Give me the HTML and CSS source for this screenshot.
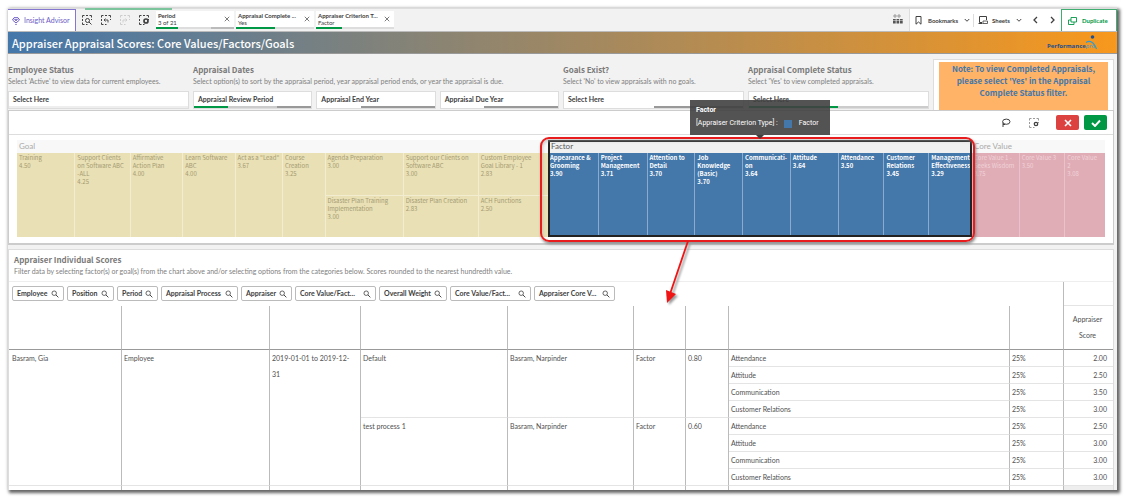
FILE: index.html
```html
<!DOCTYPE html>
<html lang="en">
<head>
<meta charset="utf-8">
<title>Appraiser Appraisal Scores</title>
<link rel="stylesheet" href="styles.css">
</head>
<body>
<svg class="defs" aria-hidden="true">
  <symbol id="search" viewBox="0 0 10 10"><circle cx="4" cy="4" r="2.8" fill="none" stroke="currentColor"/><path d="M6.2 6.2 9.2 9.2" stroke="currentColor" stroke-width="1.2"/></symbol>
  <symbol id="frame" viewBox="0 0 10 10"><path d="M.5 2.5v-2h2M4 .5h2M7.5.5h2v2M.5 4v2M9.5 4v1M.5 7.5v2h2M4 9.5h1.5" fill="none" stroke="currentColor"/></symbol>
  <symbol id="chev" viewBox="0 0 8 6"><path d="m1 1 3 3 3-3" fill="none" stroke="currentColor" stroke-width="1.3"/></symbol>
  <symbol id="x" viewBox="0 0 8 8"><path d="m1 1 6 6M7 1 1 7" fill="none" stroke="currentColor" stroke-width="1"/></symbol>
</svg>
<main class="app">
  <nav class="toolbar">
    <button class="advisor"><svg width="8" height="8" viewBox="0 0 8 8"><path d="M2 .7h4L7.500 3 4 6 .5 3z" fill="none" stroke="currentColor"/><path d="M2.500 2.500h3L4 4zM3.200 7.500h1.600" fill="none" stroke="currentColor" stroke-width=".8"/></svg>Insight Advisor</button>
    <div class="tools">
      <button aria-label="Smart search"><svg width="10" height="10"><use href="#frame"/><g transform="translate(3 3)"><circle cx="2.500" cy="2.500" r="2" fill="#f2f2f2" stroke="currentColor"/><path d="m4 4 2.500 2.500" stroke="currentColor"/></g></svg></button>
      <button aria-label="Step back"><svg width="10" height="10"><use href="#frame"/><path d="M7 7.500V5H3.500M4.500 3.500 3 5l1.500 1.500" fill="none" stroke="currentColor" stroke-width=".9"/></svg></button>
      <button aria-label="Step forward" disabled><svg width="10" height="10"><use href="#frame"/><path d="M3 7.500V5h3.500M5.500 3.500 7 5 5.500 6.500" fill="none" stroke="currentColor" stroke-width=".9"/></svg></button>
      <button aria-label="Selections tool"><svg width="10" height="10"><use href="#frame"/><circle cx="7" cy="6" r="2" fill="none" stroke="currentColor" stroke-width="1.700"/></svg></button>
    </div>
    <ul class="chips">
      <li class="chip"><span><b>Period</b><small>3 of 21</small></span><button aria-label="Clear Period"><svg width="6" height="6"><use href="#x"/></svg></button><i class="meter m-period"></i></li>
      <li class="chip"><span><b>Appraisal Complete ...</b><small>Yes</small></span><button aria-label="Clear Appraisal Complete"><svg width="6" height="6"><use href="#x"/></svg></button><i class="meter m-half"></i></li>
      <li class="chip"><span><b>Appraiser Criterion T...</b><small>Factor</small></span><button aria-label="Clear Appraiser Criterion"><svg width="6" height="6"><use href="#x"/></svg></button><i class="meter m-third"></i></li>
    </ul>
    <button class="grid-btn" aria-label="Selections overview"><svg width="10" height="10" viewBox="0 0 10 10"><path d="M1 1h2v2H1zM5 1h2v2H5z" fill="none" stroke="#888" stroke-width=".8"/><path d="M0 5h2.700v1.500H0zM3.500 5h2.700v1.500H3.500zM7 5h2.700v1.500H7zM0 7h2.700v2.500H0zM3.500 7h2.700v2.500H3.500zM7 7h2.700v2.500H7z" fill="#555"/></svg></button>
    <div class="nav-right">
      <button class="nav-btn bookmarks"><svg width="7" height="9" viewBox="0 0 7 9"><path d="M1 .5h5v7.700L3.500 6 1 8.200z" fill="none" stroke="currentColor"/></svg>Bookmarks<svg class="caret" width="6" height="5"><use href="#chev"/></svg></button>
      <button class="nav-btn sheets"><svg width="10" height="8" viewBox="0 0 10 8"><path d="M4 6.500H1.500v-6h7V4M.5 7.500h4" fill="none" stroke="currentColor"/><path d="M5 5h4.500v2.500H5z" fill="none" stroke="currentColor" stroke-width=".8"/></svg>Sheets<svg class="caret" width="6" height="5"><use href="#chev"/></svg></button>
      <button class="step" aria-label="Previous sheet"><svg width="5" height="8" viewBox="0 0 5 8"><path d="M4 1 1 4l3 3" fill="none" stroke="currentColor" stroke-width="1.300"/></svg></button>
      <button class="step" aria-label="Next sheet"><svg width="5" height="8" viewBox="0 0 5 8"><path d="m1 1 3 3-3 3" fill="none" stroke="currentColor" stroke-width="1.300"/></svg></button>
    </div>
    <button class="duplicate"><svg width="9" height="8" viewBox="0 0 9 8"><path d="M3 .5h5.500v4.500H3zM3 3H.5v4.500H6V5" fill="none" stroke="currentColor" stroke-width=".9"/></svg>Duplicate</button>
  </nav>

  <header class="title-bar">
    <h1>Appraiser Appraisal Scores: Core Values/Factors/Goals</h1>
    <div class="brand"><span>Performance</span><em>pro</em><svg width="16" height="15" viewBox="0 0 16 15"><circle cx="9.500" cy="2" r="1.800" fill="#24508c"/><path d="M3 7.500C7 5 11 7 13.500 14" fill="none" stroke="#2b9bd8" stroke-width="1.200"/></svg></div>
  </header>

  <section class="filters">
    <div class="filter">
      <h2>Employee Status</h2><p>Select 'Active' to view data for current employees.</p>
      <div class="boxes"><button class="box">Select Here<i class="meter"></i></button></div>
    </div>
    <div class="filter wide">
      <h2>Appraisal Dates</h2><p>Select option(s) to sort by the appraisal period, year appraisal period ends, or year the appraisal is due.</p>
      <div class="boxes"><button class="box">Appraisal Review Period<i class="meter m-review"></i></button><button class="box">Appraisal End Year<i class="meter m-gray"></i></button><button class="box">Appraisal Due Year<i class="meter m-gray"></i></button></div>
    </div>
    <div class="filter">
      <h2>Goals Exist?</h2><p>Select 'No' to view appraisals with no goals.</p>
      <div class="boxes"><button class="box">Select Here<i class="meter m-grayhalf"></i></button></div>
    </div>
    <div class="filter">
      <h2>Appraisal Complete Status</h2><p>Select 'Yes' to view completed appraisals.</p>
      <div class="boxes"><button class="box">Select Here<i class="meter m-half"></i></button></div>
    </div>
    <aside class="note"><p>Note: To view Completed Appraisals,<br>please select 'Yes' in the Appraisal<br>Complete Status filter.</p></aside>
  </section>

  <section class="panel chart">
    <div class="chart-tools">
      <button class="icon" aria-label="Lasso"><svg width="10" height="10" viewBox="0 0 10 10"><ellipse cx="5.300" cy="3.700" rx="3.700" ry="2.600" fill="none" stroke="currentColor"/><path d="M2 4.500v4.500M2 6.500h2" fill="none" stroke="currentColor"/></svg></button>
      <button class="icon soft" aria-label="Selection options"><svg width="10" height="10"><use href="#frame"/><circle cx="7" cy="6" r="1.700" fill="none" stroke="#404040" stroke-width="1.300"/></svg></button>
      <button class="act cancel" aria-label="Cancel selection"><svg width="8" height="8" viewBox="0 0 8 8"><path d="m1 1 6 6M7 1 1 7" stroke="#fff" stroke-width="1.600"/></svg></button>
      <button class="act confirm" aria-label="Confirm selection"><svg width="10" height="8" viewBox="0 0 10 8"><path d="m1 4 3 3 5-5.500" fill="none" stroke="#fff" stroke-width="1.900"/></svg></button>
    </div>
    <div class="treemap">
      <div class="group goal">
        <h3>Goal</h3>
        <div class="tiles">
          <div>Training<br>4.50</div><div>Support Clients<br>on Software ABC<br>-ALL<br>4.25</div><div>Affirmative<br>Action Plan<br>4.00</div><div>Learn Software<br>ABC<br>4.00</div><div>Act as a "Lead"<br>3.67</div><div>Course<br>Creation<br>3.25</div>
          <section><div>Agenda Preparation<br>3.00</div><div>Disaster Plan Training<br>Implementation<br>3.00</div></section>
          <section><div>Support our Clients on<br>Software ABC<br>3.00</div><div>Disaster Plan Creation<br>2.83</div></section>
          <section><div>Custom Employee<br>Goal Library - 1<br>2.83</div><div>ACH Functions<br>2.50</div></section>
        </div>
      </div>
      <div class="group factor">
        <h3>Factor</h3>
        <div class="tiles">
          <div>Appearance &amp;<br>Grooming<br>3.90</div><div>Project<br>Management<br>3.71</div><div>Attention to<br>Detail<br>3.70</div><div>Job<br>Knowledge<br>(Basic)<br>3.70</div><div>Communicati-<br>on<br>3.64</div><div>Attitude<br>3.64</div><div>Attendance<br>3.50</div><div>Customer<br>Relations<br>3.45</div><div>Management<br>Effectiveness<br>3.29</div>
        </div>
        <div class="callout"></div>
        <svg class="arrow" width="40" height="70" viewBox="0 0 40 70"><path d="M30 4 12 57" stroke="#f01414" stroke-width="1.800"/><path d="m9 66-1-13 10 4z" fill="#f01414"/></svg>
        <div class="tooltip" role="tooltip"><b>Factor</b><div>[Appraiser Criterion Type] :<i></i>Factor</div></div>
      </div>
      <div class="group core">
        <h3>Core Value</h3>
        <div class="tiles"><div>Core Value 1 -<br>Seeks Wisdom<br>3.75</div><div>Core Value 3<br>3.50</div><div>Core Value<br>2<br>3.08</div></div>
      </div>
    </div>
  </section>

  <section class="panel scores">
    <header><h2>Appraiser Individual Scores</h2><p>Filter data by selecting factor(s) or goal(s) from the chart above and/or selecting options from the categories below. Scores rounded to the nearest hundredth value.</p></header>
    <table>
      <colgroup><col class="c1"><col class="c2"><col class="c3"><col class="c4"><col class="c5"><col class="c6"><col class="c7"><col class="c8"><col class="c9"><col class="c10"></colgroup>
      <thead>
        <tr class="dims"><td colspan="9"><div class="pills">
          <button class="w1">Employee<svg width="8" height="8"><use href="#search"/></svg></button><button class="w2">Position<svg width="8" height="8"><use href="#search"/></svg></button><button class="w3">Period<svg width="8" height="8"><use href="#search"/></svg></button><button class="w4">Appraisal Process<svg width="8" height="8"><use href="#search"/></svg></button><button class="w5">Appraiser<svg width="8" height="8"><use href="#search"/></svg></button><button class="w6">Core Value/Fact...<svg width="8" height="8"><use href="#search"/></svg></button><button class="w7">Overall Weight<svg width="8" height="8"><use href="#search"/></svg></button><button class="w6">Core Value/Fact...<svg width="8" height="8"><use href="#search"/></svg></button><button class="w6">Appraiser Core V...<svg width="8" height="8"><use href="#search"/></svg></button>
        </div></td><td></td></tr>
        <tr class="heads"><td></td><td></td><td></td><td></td><td></td><td></td><td></td><td></td><td></td><th scope="col">Appraiser Score</th></tr>
      </thead>
      <tbody>
        <tr><td rowspan="8">Basram, Gia</td><td rowspan="8">Employee</td><td rowspan="8">2019-01-01 to 2019-12-<br>31</td><td rowspan="4">Default</td><td rowspan="4">Basram, Narpinder</td><td rowspan="4">Factor</td><td rowspan="4">0.80</td><td>Attendance</td><td>25%</td><td class="num">2.00</td></tr>
        <tr><td>Attitude</td><td>25%</td><td class="num">2.50</td></tr>
        <tr><td>Communication</td><td>25%</td><td class="num">3.50</td></tr>
        <tr><td>Customer Relations</td><td>25%</td><td class="num">3.00</td></tr>
        <tr><td rowspan="4">test process 1</td><td rowspan="4">Basram, Narpinder</td><td rowspan="4">Factor</td><td rowspan="4">0.60</td><td>Attendance</td><td>25%</td><td class="num">2.50</td></tr>
        <tr><td>Attitude</td><td>25%</td><td class="num">3.00</td></tr>
        <tr><td>Communication</td><td>25%</td><td class="num">3.00</td></tr>
        <tr><td>Customer Relations</td><td>25%</td><td class="num">3.00</td></tr>
        <tr class="more"><td></td><td></td><td></td><td></td><td></td><td></td><td></td><td></td><td></td><td></td></tr>
      </tbody>
    </table>
  </section>
</main>
</body>
</html>
```
FILE: styles.css
```css
* { box-sizing: border-box; }
body { margin: 0; padding: 8px; background: #fff; color: #505050; font: 7px/9px Lato, "Open Sans", sans-serif; }
.defs { position: absolute; width: 0; height: 0; }
h1, h2, h3, p, ul { margin: 0; padding: 0; }
button { font: inherit; color: inherit; background: none; border: 0; padding: 0; }
svg { flex: none; }
.app { background: #f2f2f2; box-shadow: 2px 2px 3px 1px #666, 0 0 4px #ddd; }

.toolbar { position: relative; display: flex; align-items: stretch; height: 24px; border-bottom: 1px solid #bbb; border-top: 1px solid #ddd; }
.toolbar::before { content: ""; position: absolute; left: 77px; top: -1px; width: 87px; height: 2px; background: #7cc49b; }
.advisor { display: flex; align-items: center; gap: 4px; width: 68px; padding-left: 4px; background: #fff; color: #6c5cc4; border-top: 1px solid #8577d0; border-right: 1px solid #8577d0; white-space: nowrap; }
.tools { display: flex; align-items: center; gap: 9px; width: 80px; padding-left: 6px; color: #404040; }
.tools button { display: flex; }
.tools button:disabled { color: #ccc; }
.chips { display: flex; gap: 2px; list-style: none; padding-top: 2px; }
.chip { display: grid; grid-template-columns: 1fr 14px; grid-template-rows: 16px 2px; width: 78px; height: 18px; background: #fff; white-space: nowrap; }
.chip span { padding: 1px 0 0 2px; color: #404040; }
.chip b, .chip small { display: block; font-size: 6px; line-height: 7px; }
.chip b { font-weight: 700; }
.chip .meter { grid-column: 1 / 3; }
.meter { display: block; height: 2px; background: #ddd; }
.m-period { background: linear-gradient(90deg, #009845 28%, #ddd 28% 71%, #bbb 71%); }
.m-half { background: linear-gradient(90deg, #009845 50%, #ddd 50%); }
.m-third { background: linear-gradient(90deg, #009845 33%, #ddd 33%); }
.grid-btn { margin-left: auto; padding-right: 6px; }
.nav-right { display: flex; align-items: center; background: #fff; border-left: 1px solid #ddd; }
.nav-btn { display: flex; align-items: center; gap: 6px; height: 13px; color: #404040; font-size: 6px; font-weight: 700; }
.bookmarks { width: 64px; padding-left: 5px; border-right: 1px solid #ddd; }
.sheets { width: 53px; padding-left: 4px; gap: 4px; }
.caret { margin-left: auto; margin-right: 5px; }
.step { display: grid; place-items: center; width: 17px; color: #404040; }
.duplicate { display: flex; align-items: center; gap: 5px; width: 56px; padding-left: 6px; background: #fff; color: #009845; border: 1px solid #3fae70; border-bottom: 0; font-size: 6px; font-weight: 700; }

.title-bar { display: flex; align-items: center; justify-content: space-between; height: 22px; padding: 0 18px 0 4px; background: linear-gradient(90deg, #4477aa, #f8981d); border-bottom: 1px solid #999; }
h1 { color: #fff; font: 500 11px/20px "Noto Sans CJK SC", "Open Sans", sans-serif; }
.brand { display: flex; align-items: flex-end; font: 700 6px/8px "Open Sans", sans-serif; color: #24508c; }
.brand em { color: #2b9bd8; font-weight: 400; }
.brand svg { margin-left: -12px; }

.filters { display: grid; grid-template-columns: 181fr 366fr 181fr 181fr 181fr; gap: 4px; padding: 5px 3px 0 0; height: 56px; }
.filter { padding-top: 5px; white-space: nowrap; }
h2 { font: 700 8px/12px "Noto Sans CJK SC", "Open Sans", sans-serif; color: #7a7a7a; }
.filter p, .scores p { color: #808080; line-height: 10px; }
.boxes { display: flex; gap: 4px; margin-top: 5px; }
.box { flex: 1; display: flex; flex-direction: column; text-align: left; background: #fff; border: 1px solid #ddd; font-weight: 700; line-height: 14px; color: #404040; text-indent: 4px; }
.box .meter { width: 100%; background: #eee; }
.box .m-review { background: linear-gradient(90deg, #009845 29%, #ccc 29% 71%, #999 71%); }
.box .m-gray { background: linear-gradient(90deg, #fff 37%, #999 37%); }
.box .m-grayhalf { background: linear-gradient(90deg, #fff 50%, #999 50%); }
.box .m-half { background: linear-gradient(90deg, #009845 50%, #ccc 50%); }
.note { background: #fff; border: 1px solid #ddd; border-bottom: 0; padding: 2px 5px 0; }
.note p { height: 100%; padding-top: 1px; background: #ffb366; color: #4477aa; text-align: center; font: 700 8px/12px "Noto Sans CJK SC", "Open Sans", sans-serif; }

.panel { margin-right: 3px; background: #fff; border: 1px solid #ccc; }
.chart { border-bottom-width: 2px; }
.chart-tools { display: flex; align-items: center; justify-content: flex-end; gap: 5px; height: 24px; padding-right: 6px; border-bottom: 1px solid #ddd; }
.icon { display: flex; padding: 0 7px 0 6px; color: #404040; }
.soft { color: #999; padding-right: 12px; }
.act { display: grid; place-items: center; width: 23px; height: 15px; border-radius: 2px; }
.cancel { background: #dc423f; }
.confirm { background: #009845; }
.treemap { display: grid; grid-template-columns: 531fr 424fr 133fr; padding: 5px 8px 6px; }
.group { position: relative; min-width: 0; }
h3 { height: 13px; padding-left: 2px; font-size: 8px; line-height: 13px; font-weight: 400; color: #aaa; background: #f8f8f8; }
.tiles { display: grid; height: 84px; gap: 1px; white-space: nowrap; font: 6px/8px "Noto Sans CJK SC", "Open Sans", sans-serif; }
.tiles div { min-width: 0; padding: 1px 0 0 2px; }
.goal .tiles { grid-template-columns: 58fr 55fr 52fr 52fr 47fr 42fr 78fr 75fr 70fr; color: #a39b72; background: #f2ecd0; }
.goal .tiles div { background: #eae0b5; }
.goal section { display: grid; gap: 1px; grid-template-rows: 42fr 41fr; min-width: 0; }
.factor { outline: 2px solid #222; outline-offset: -2px; z-index: 1; }
.factor h3 { color: #595959; background: #f0f0f0; padding-left: 3px; }
.factor .tiles { grid-template-columns: 50fr 48fr 47fr 47fr 47fr 47fr 45fr 44fr 43fr; font-weight: 700; color: #fff; background: #8aabcc; }
.factor .tiles div { background: #4477aa; }
.core .tiles { grid-template-columns: 47fr 45fr 40fr; color: #f0d3d9; background: #eac2ca; }
.core .tiles div { background: #e0adb6; }
.callout { position: absolute; inset: -3px -3px -5px -8px; border: 2px solid #e81c1c; border-radius: 9px; box-shadow: 1px 2px 3px #888, inset 1px 2px 3px #aaa8; pointer-events: none; }
.arrow { position: absolute; left: 26%; top: 100%; filter: drop-shadow(2px 2px 1px #999); }
.tooltip { position: absolute; left: 50%; bottom: 102px; transform: translateX(-50%); width: 140px; padding: 5px 6px 6px; background: #404040e6; color: #fff; white-space: nowrap; font-family: Roboto, sans-serif; line-height: 11px; }
.tooltip div { display: flex; align-items: center; margin-top: 2px; }
.tooltip i { width: 8px; height: 8px; margin: 0 7px 0 6px; background: #4477aa; }
.tooltip::after { content: ""; position: absolute; left: 50%; top: 100%; margin-left: -4px; border: 4px solid transparent; border-top-color: #404040; }

.scores { margin-top: 4px; border-color: #ddd; border-bottom: 0; }
.scores header { padding: 4px 5px; border-bottom: 1px solid #eee; height: 32px; }
table { width: 100%; table-layout: fixed; border-collapse: separate; border-spacing: 0; }
.c1 { width: 113px; } .c2 { width: 148px; } .c3 { width: 91px; } .c4 { width: 147px; } .c5 { width: 126px; } .c6 { width: 52px; } .c7 { width: 43px; } .c9 { width: 54px; } .c10 { width: 49px; }
td, th { padding: 0 4px 0 2px; border-right: 1px solid #bbb; border-bottom: 1px solid #e4e4e4; text-align: left; vertical-align: top; font-weight: 400; line-height: 16px; }
td:first-child[rowspan="8"] { padding-left: 3px; }
td:last-child, th:last-child { border-right: 0; }
.dims td { height: 24px; }
.dims td:first-child { border-bottom: 0; padding: 4px 0 0 3px; }
.heads td, .heads th { height: 44px; border-bottom-color: #999; }
.heads th { text-align: center; padding-top: 5px; }
td.num { text-align: right; padding-right: 6px; }
.more td { height: 4px; border-bottom: 0; }
.more td:last-child { background: #eee; }
.pills { display: flex; gap: 3px; }
.pills button { display: flex; justify-content: space-between; align-items: center; height: 15px; padding: 0 4px; border: 1px solid #bbb; border-radius: 2px; font-weight: 700; line-height: 13px; color: #404040; white-space: nowrap; }
.w1 { width: 52px; } .w2 { width: 47px; } .w3 { width: 41px; } .w4 { width: 77px; } .w5 { width: 51px; } .w6 { width: 81px; } .w7 { width: 68px; }
```
